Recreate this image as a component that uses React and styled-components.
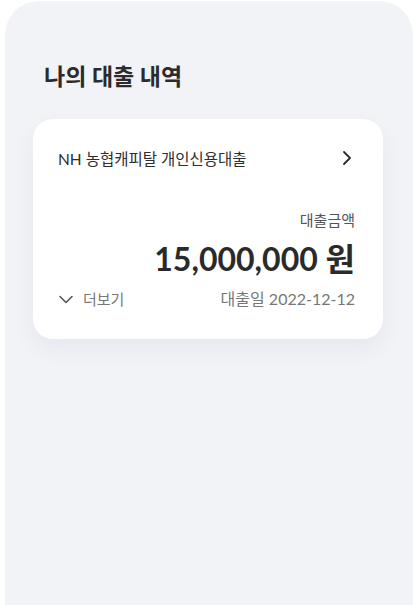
import React from "react";
import styled, { createGlobalStyle } from "styled-components";

const GlobalStyle = createGlobalStyle`
  html, body {
    margin: 0;
    padding: 0;
    background: #ffffff;
    font-family: Lato, "Noto Sans CJK KR", sans-serif;
  }
`;

const Panel = styled.div`
  margin: 1px 2px 0 5px;
  height: 604px;
  background: #f2f3f7;
  border-radius: 34px 34px 0 0;
  padding: 57px 30px 0 28px;
  box-sizing: border-box;
  display: flex;
  flex-direction: column;
`;

const Title = styled.h2`
  margin: 0 0 0 11px;
  font-size: 23px;
  line-height: 36px;
  font-weight: 700;
  color: #2b2b2b;
`;

const Card = styled.div`
  margin-top: 25px;
  background: #ffffff;
  border-radius: 20px;
  padding: 24px 28px 29px 25px;
  box-shadow: 0 10px 22px rgba(40, 50, 80, 0.06);
  display: flex;
  flex-direction: column;
`;

const Header = styled.div`
  display: flex;
  align-items: center;
  justify-content: space-between;
  height: 30px;
`;

const Name = styled.span`
  font-size: 15.5px;
  color: #2e2e2e;
`;

const Amount = styled.div`
  margin-top: 36px;
  display: flex;
  flex-direction: column;
  align-items: flex-end;
`;

const Label = styled.span`
  font-size: 15px;
  line-height: 22px;
  color: #555;
`;

const Value = styled.span`
  margin-top: 6px;
  font-size: 32px;
  line-height: 44px;
  font-weight: 700;
  color: #2a2a2a;
`;

const Footer = styled.div`
  margin-top: 7px;
  display: flex;
  align-items: center;
  justify-content: space-between;
  color: #777;
  line-height: 22px;
`;

const More = styled.button`
  border: none;
  background: none;
  padding: 0;
  font: inherit;
  font-size: 15px;
  color: inherit;
  display: flex;
  align-items: center;
  gap: 9px;
`;

const LoanDate = styled.span`
  font-size: 16px;
`;

const Chevron = ({ dir }) => (
  <svg width="16" height="16" viewBox="0 0 16 16" fill="none">
    {dir === "right" ? (
      <path d="M5 2l6 6-6 6" stroke="#2b2b2b" strokeWidth="1.8" strokeLinecap="round" strokeLinejoin="round" />
    ) : (
      <path d="M2 5.5l6 6 6-6" stroke="#555" strokeWidth="1.6" strokeLinecap="round" strokeLinejoin="round" />
    )}
  </svg>
);

export default function App() {
  return (
    <>
      <GlobalStyle />
      <Panel>
        <Title>나의 대출 내역</Title>
        <Card>
          <Header>
            <Name>NH 농협캐피탈 개인신용대출</Name>
            <Chevron dir="right" />
          </Header>
          <Amount>
            <Label>대출금액</Label>
            <Value>15,000,000 원</Value>
          </Amount>
          <Footer>
            <More>
              <Chevron dir="down" />
              더보기
            </More>
            <LoanDate>대출일 2022-12-12</LoanDate>
          </Footer>
        </Card>
      </Panel>
    </>
  );
}
